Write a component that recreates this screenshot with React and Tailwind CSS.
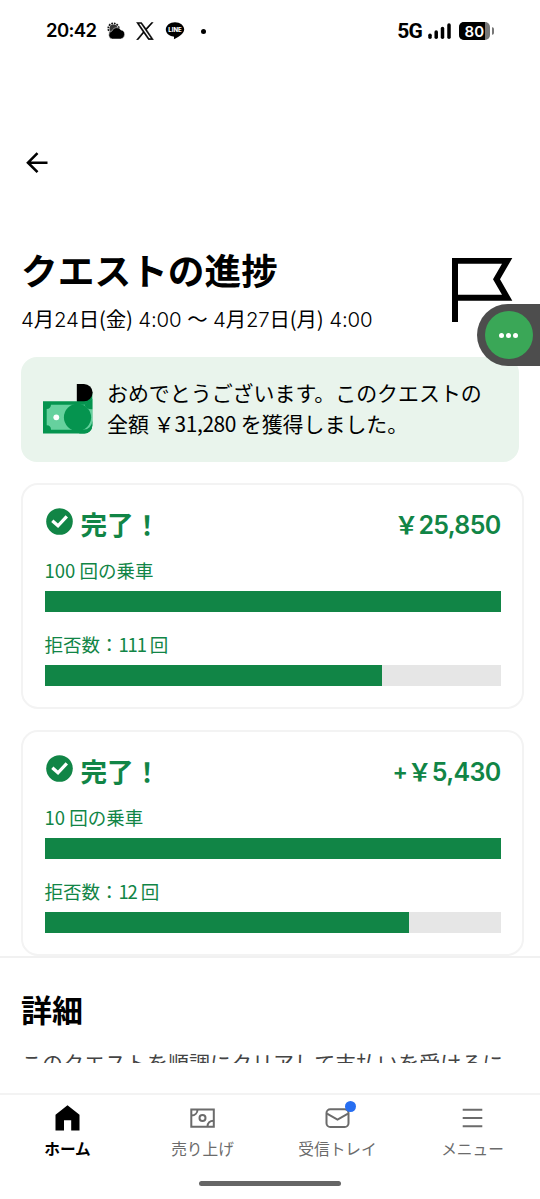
import React from 'react';

const quests = [
  { id: 1, amount: '25,850', prefix: '', rides: '100', declined: '111', declinedWidth: 74 },
  { id: 2, amount: '5,430', prefix: '+', rides: '10', declined: '12', declinedWidth: 80 },
];

const WeatherIcon = () => (
  <svg width="18" height="18" viewBox="0 0 18 18">
    <circle cx="6.5" cy="6.5" r="5.2" fill="none" stroke="#111" strokeWidth="1.8" strokeDasharray="1.7 1" />
    <circle cx="6.5" cy="6.5" r="3.9" fill="#333" />
    <path
      d="M5.5 17a4 4 0 0 1-.6-7.900 5 5 0 0 1 9-1.200 4.600 4.600 0 0 1-.4 9.100z"
      fill="#000"
      stroke="#fff"
      strokeWidth=".5"
    />
  </svg>
);

const XIcon = () => (
  <svg width="18" height="18" viewBox="0 0 24 24">
    <path
      d="M14.2 10.2 22.8 0.500h-2.100l-7.400 8.300L7.300 0.500H.8l8.600 12.800L.8 23.500h2.100l7.400-8.900 6.300 8.900h6.600zM3.600 2h3l13.800 20h-3z"
      fill="#000"
      stroke="#000"
      strokeWidth=".7"
    />
  </svg>
);

const LineIcon = () => (
  <svg width="20" height="20" viewBox="0 0 20 20">
    <path d="M10 1.200c-5 0-9.200 3.200-9.200 7.300 0 3.600 3.200 6.600 7.700 7.100.9.2.5 1.400.4 2.600 4-2 10.300-5.300 10.300-9.700 0-4.100-4.200-7.300-9.200-7.300z" fill="#000" />
    <text x="10" y="10.900" textAnchor="middle" fontSize="6" fontWeight="800" fontFamily="Inter, sans-serif" fill="#fff">
      LINE
    </text>
  </svg>
);

const SignalIcon = () => (
  <svg width="24" height="17" viewBox="0 0 24 17">
    <g stroke="#000" strokeWidth="3.5" strokeLinecap="round">
      <path d="M2 12.200v2" />
      <path d="M8.200 9v5.200" />
      <path d="M14.500 5.500v8.700" />
      <path d="M21 2v12.200" />
    </g>
  </svg>
);

const BatteryIcon = () => (
  <svg width="36" height="18" viewBox="0 0 36 18">
    <rect width="31" height="18" rx="5" fill="#777" />
    <path d="M5 0h21v18H5a5 5 0 0 1-5-5V5a5 5 0 0 1 5-5z" fill="#000" />
    <path d="M33 5.300h.3a1.700 1.700 0 0 1 1.700 1.700v4a1.700 1.700 0 0 1-1.700 1.700H33z" fill="#777" />
    <text x="15.300" y="14.500" textAnchor="middle" fontSize="15" fontWeight="600" fontFamily="Inter, sans-serif" fill="#fff">
      80
    </text>
  </svg>
);

const FlagIcon = () => (
  <svg width="61" height="64" viewBox="0 0 61 64">
    <path d="M0 0h60.300L48 21.300l12.300 21.400H6V64H0zm6 5.700v31h44L41 21.300l9-15.600z" fill="#000" fillRule="evenodd" />
  </svg>
);

const MoneyIcon = () => (
  <svg width="50" height="50" viewBox="0 0 50 50">
    <path d="M0 17.200h34L49.300 8v33.500a8 8 0 0 1-8 8H0z" fill="#05944f" />
    <path d="M8 20.800h33l4-2 4.300-4v26a5 5 0 0 1-5 5H8a4.500 4.500 0 0 0-4.300-4.500V25A4.400 4.400 0 0 0 8 20.800z" fill="#66d19e" />
    <path d="M40 45.800a9 9 0 0 0 9.300-9v5a8 8 0 0 1-8 7.700H36zM49.300 25.300a8 8 0 0 1-8-4.500l8-6z" fill="#05944f" />
    <circle cx="34.500" cy="33.300" r="13.600" fill="#05944f" />
    <circle cx="13.300" cy="33.300" r="2.900" fill="#fff" />
    <path d="M33.800 0h7.200a8.500 8.500 0 0 1 0 17.200h-7.200z" fill="#000" />
  </svg>
);

const CheckIcon = () => (
  <svg width="28" height="27" viewBox="0 0 28 27" className="shrink-0">
    <circle cx="14.500" cy="13.500" r="13.300" fill="#118546" />
    <path d="M7.300 12.700 13 17.800l8.800-9.400" fill="none" stroke="#fff" strokeWidth="3.300" />
  </svg>
);

const HomeIcon = () => (
  <svg width="26" height="26" viewBox="0 0 26 26">
    <path d="M12.500 .3 24.500 9.800V25.500h-8.300V15.300H9v10.200H.5V9.800z" fill="#000" />
  </svg>
);

const EarningsIcon = () => (
  <svg width="26" height="26" viewBox="0 0 26 26" fill="none" stroke="#6b6b6b" strokeWidth="2">
    <path d="M1.300 4.500h22.500v17.200H1.300z" />
    <circle cx="12.500" cy="13" r="3" />
    <path d="M1.500 10.500c3.500 0 6-2.300 6-6M23.500 15.700c-3.500 0-6 2.300-6 6" />
  </svg>
);

const InboxIcon = () => (
  <svg width="26" height="26" viewBox="0 0 26 26" fill="none" stroke="#6b6b6b" strokeWidth="2">
    <rect x="1.500" y="4.300" width="22" height="17.700" rx="3.800" />
    <path d="m2 8.700 10.500 6 10.500-6" />
  </svg>
);

const MenuIcon = () => (
  <svg width="26" height="26" viewBox="0 0 26 26" stroke="#6b6b6b" strokeWidth="2">
    <path d="M2.700 4.700h19.600M2.700 13h19.600M2.700 21.200h19.600" />
  </svg>
);

const navItems = [
  { label: 'ホーム', icon: HomeIcon, active: true },
  { label: '売り上げ', icon: EarningsIcon },
  { label: '受信トレイ', icon: InboxIcon, badge: true },
  { label: 'メニュー', icon: MenuIcon },
];

const StatusBar = () => (
  <div className="flex h-[62px] shrink-0 items-center pl-[46px] pr-[45px]">
    <span className="w-[61px] font-['Inter'] text-[18.5px] font-semibold tracking-[-0.6px]">20:42</span>
    <WeatherIcon />
    <span className="ml-[11px]"><XIcon /></span>
    <span className="ml-[11px]"><LineIcon /></span>
    <span className="ml-[16px] h-[5px] w-[5px] rounded-full bg-black" />
    <span className="ml-auto font-['Roboto'] text-[21px] font-bold leading-[24px] tracking-[-0.8px]">5G</span>
    <span className="ml-[6px]"><SignalIcon /></span>
    <span className="ml-[7px]"><BatteryIcon /></span>
  </div>
);

const ProgressBar = ({ percent }) => (
  <div className="h-[21px] bg-[#e6e6e6]">
    <div className="h-full bg-[#118546]" style={{ width: `${percent}%` }} />
  </div>
);

const QuestCard = ({ quest }) => (
  <section className="h-[226px] rounded-[17px] border-2 border-[#f3f3f3] px-[21.5px] pt-[21px] text-[#118546]">
    <div className="flex h-[36px] items-center">
      <span className="-mt-[5px]"><CheckIcon /></span>
      <h2 className="ml-[8px] text-[26.6px] font-bold leading-[36px]">完了！</h2>
      <p className="ml-auto flex items-center pt-[2px] font-bold leading-[36px]">
        {quest.prefix && <span className="font-['Inter'] text-[23px] font-semibold">{quest.prefix}</span>}
        <span className="-mt-[2px] text-[24px]">￥</span>
        <span className="font-['Inter'] text-[25px] font-semibold tracking-[-0.7px]">{quest.amount}</span>
      </p>
    </div>
    <p className="mt-[14px] mb-[7px] h-[28px] text-[18.5px] leading-[28px]">{quest.rides} 回の乗車</p>
    <ProgressBar percent={100} />
    <p className="mt-[18px] mb-[7px] h-[28px] text-[18.5px] leading-[28px]">
      拒否数：<span className="tracking-[-1.2px]">{quest.declined}</span> 回
    </p>
    <ProgressBar percent={quest.declinedWidth} />
  </section>
);

const BottomNav = () => (
  <nav className="h-[106px] shrink-0 border-t-2 border-[#f3f3f3] pt-[10px]">
    <div className="grid grid-cols-4">
      {navItems.map(({ label, icon: Icon, active, badge }) => (
        <div
          key={label}
          className={`flex flex-col items-center ${active ? 'font-bold text-black' : 'text-[#6b6b6b]'}`}
        >
          <div className="relative">
            <Icon />
            {badge && <span className="absolute -top-[4px] left-[20px] h-[11px] w-[11px] rounded-full bg-[#276ef1]" />}
          </div>
          <span className="mt-[6px] text-[15.7px] leading-[24px]">{label}</span>
        </div>
      ))}
    </div>
    <div className="mx-auto mt-[20px] h-[5px] w-[142px] rounded-full bg-[#666]" />
  </nav>
);

const App = () => (
  <div className="relative flex h-[1199px] w-[540px] flex-col overflow-hidden bg-white font-['Noto_Sans_CJK_JP',sans-serif] text-black">
    <StatusBar />

    <header className="flex h-[180px] shrink-0 pl-[26px] pt-[90px]">
      <svg width="22" height="22" viewBox="0 0 22 22" fill="none" stroke="#000" strokeWidth="2.6">
        <path d="M21.500 10.700H2M11.500 1.200 2 10.700l9.500 9.500" />
      </svg>
    </header>

    <main className="flex h-[820.5px] shrink-0 flex-col overflow-hidden">
      <div className="flex shrink-0 justify-between pl-[21px] pr-[27px]">
        <div>
          <h1 className="text-[36.7px] font-bold leading-[54px]">クエストの進捗</h1>
          <p className="mt-[7px] whitespace-nowrap text-[20.4px] leading-[30px] tracking-[-0.14px]">
            <span className="font-['Inter'] font-light">4</span>月<span className="font-['Inter'] font-light">24</span>日(金)
            <span className="font-['Inter'] font-light"> 4:00 </span>～<span className="font-['Inter'] font-light"> 4</span>月
            <span className="font-['Inter'] font-light">27</span>日(月)<span className="font-['Inter'] font-light"> 4:00</span>
          </p>
        </div>
        <div className="pt-[16px]"><FlagIcon /></div>
      </div>

      {/* Aviso de cantidad ganada */}
      <div className="ml-[21px] mt-[21.5px] flex h-[105px] w-[498px] shrink-0 rounded-[16px] bg-[#e9f4ec] pl-[22px] pt-[20px]">
        <div className="mt-[7.5px] shrink-0"><MoneyIcon /></div>
        <p className="ml-[14px] whitespace-nowrap text-[20.95px] leading-[31px]">
          おめでとうございます。このクエストの<br />
          全額 ￥<span className="tracking-[-0.4px]">31,280</span> を獲得しました。
        </p>
      </div>

      <div className="ml-[21px] mr-[16px] mt-[21px] flex shrink-0 flex-col gap-[21.5px]">
        {quests.map((quest) => (
          <QuestCard key={quest.id} quest={quest} />
        ))}
      </div>

      <section className="shrink-0 border-t-2 border-[#f1f1f1] px-[21px] pt-[27.5px]">
        <h2 className="text-[31px] font-bold leading-[46px]">詳細</h2>
        <p className="mt-[14.5px] whitespace-nowrap text-[21px] leading-[32px] text-[#444]">
          このクエストを順調にクリアして支払いを受けるに
        </p>
      </section>
    </main>

    <div className="flex-1" />
    <BottomNav />

    {/* Botón flotante pegado al borde derecho */}
    <div className="absolute right-0 top-[304px] flex h-[62px] w-[63px] items-center rounded-l-full bg-[#4d4d4d] pl-[7.5px]">
      <div className="flex h-[48px] w-[48px] items-center justify-center gap-[2px] rounded-full bg-[#3aa757]">
        <span className="h-[5px] w-[5px] rounded-full bg-white" />
        <span className="h-[5px] w-[5px] rounded-full bg-white" />
        <span className="h-[5px] w-[5px] rounded-full bg-white" />
      </div>
    </div>
  </div>
);

export default App;
